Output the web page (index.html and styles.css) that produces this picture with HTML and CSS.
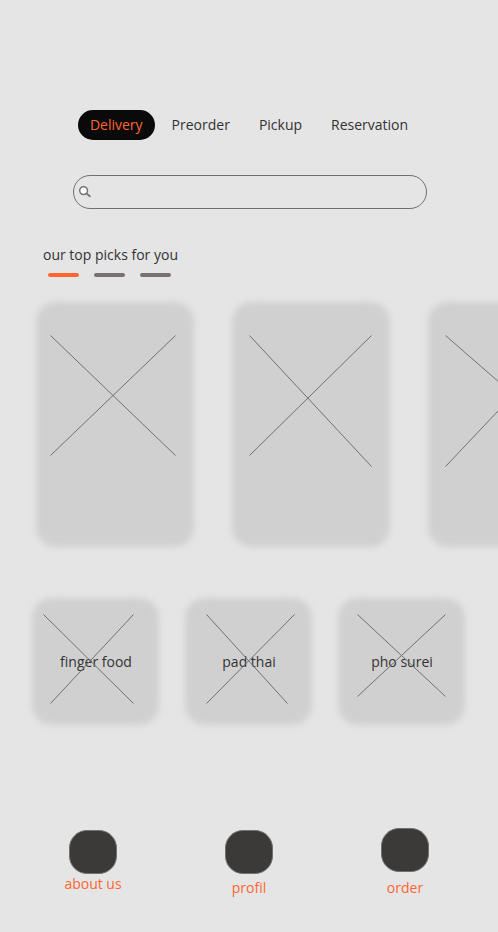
FILE: index.html
```html
<!DOCTYPE html>
<html lang="en">
<head>
<meta charset="utf-8">
<meta name="viewport" content="width=device-width, initial-scale=1">
<title>Top picks</title>
<link rel="stylesheet" href="styles.css">
</head>
<body>
<div class="app">
  <nav class="tabs">
    <button class="tab tab-active" type="button">Delivery</button>
    <button class="tab" type="button">Preorder</button>
    <button class="tab" type="button">Pickup</button>
    <button class="tab" type="button">Reservation</button>
  </nav>

  <form class="search">
    <svg class="search-icon" viewBox="0 0 14 14" aria-hidden="true">
      <circle class="lens" cx="5.6" cy="5.6" r="3.9"/>
      <path class="handle" d="M8.4 8.4 L12.4 11.8"/>
    </svg>
    <input class="search-input" type="search" aria-label="Search">
  </form>

  <main>
    <section class="picks">
      <h1 class="picks-title">our top picks for you</h1>
      <div class="pager">
        <span class="dash dash-active"></span>
        <span class="dash"></span>
        <span class="dash"></span>
      </div>
      <div class="carousel">
        <article class="card">
          <svg class="cross" aria-hidden="true"><path d="M13.5 32.5 L138.5 152.5 M13.5 152.5 L138.5 32.5"/></svg>
        </article>
        <article class="card">
          <svg class="cross" aria-hidden="true"><path d="M16.5 32.5 L138.5 163.5 M16.5 152.5 L138.5 32.5"/></svg>
        </article>
        <article class="card">
          <svg class="cross" aria-hidden="true"><path d="M16.5 32.5 L140.5 140.5 M16.5 163.5 L140.5 32.5"/></svg>
        </article>
      </div>
    </section>

    <section class="tiles">
      <a class="tile" href="#finger-food">finger food
        <svg class="cross" aria-hidden="true"><path d="M10.5 15.5 L100.5 104.5 M17.5 104.5 L100.5 15.5"/></svg>
      </a>
      <a class="tile" href="#pad-thai">pad thai
        <svg class="cross" aria-hidden="true"><path d="M20.5 15.5 L101.5 104.5 M20.5 104.5 L108.5 15.5"/></svg>
      </a>
      <a class="tile" href="#pho-surei">pho surei
        <svg class="cross" aria-hidden="true"><path d="M18.5 15.5 L106.5 97.5 M18.5 97.5 L106.5 15.5"/></svg>
      </a>
    </section>
  </main>

  <nav class="bottom-nav">
    <a class="nav-item nav-item-tight" href="#about"><span class="nav-icon"></span>about us</a>
    <a class="nav-item" href="#profil"><span class="nav-icon"></span>profil</a>
    <a class="nav-item nav-item-raised" href="#order"><span class="nav-icon"></span>order</a>
  </nav>
</div>
</body>
</html>
```
FILE: styles.css
```css
* {
  box-sizing: border-box;
}

body {
  margin: 0;
  background: #e5e5e5;
  color: #333;
  font: 14px/20px "Open Sans", "Noto Sans", sans-serif;
  font-variant-ligatures: none;
}

.app {
  padding-top: 110px;
  overflow: hidden;
}

.tabs {
  display: flex;
  justify-content: center;
  gap: 5px;
}

.tab {
  height: 30px;
  padding: 0 12px;
  border: 0;
  border-radius: 15px;
  background: transparent;
  color: inherit;
  font: inherit;
}

.tab-active {
  background: #0a0a0a;
  color: #ff6533;
}

.search {
  display: flex;
  align-items: center;
  height: 34px;
  margin: 35px 71px 0 73px;
  padding: 0 16px 0 4px;
  border: 1px solid #707070;
  border-radius: 17px;
}

.search-icon {
  flex: none;
  width: 14px;
  height: 14px;
}

.lens {
  fill: #fff;
  stroke: #757575;
  stroke-width: 1.5;
}

.handle {
  stroke: #757575;
  stroke-width: 1.8;
}

.search-input {
  flex: 1;
  min-width: 0;
  border: 0;
  outline: 0;
  background: transparent;
  color: inherit;
  font: inherit;
}

.picks {
  margin-top: 36px;
}

.picks-title {
  margin: 0 0 0 43px;
  font-size: 14px;
  font-weight: 400;
  line-height: 20px;
}

.pager {
  display: flex;
  gap: 15px;
  margin: 8px 0 0 48px;
}

.dash {
  width: 31px;
  height: 4px;
  border-radius: 2px;
  background: #7a7071;
}

.dash-active {
  background: #ff6533;
}

.carousel {
  display: flex;
  gap: 40px;
  margin-top: 26px;
  padding-left: 37px;
}

.card,
.tile {
  position: relative;
  isolation: isolate;
}

.card::before,
.tile::before {
  content: "";
  position: absolute;
  inset: -1px 0 0 -1px;
  z-index: -1;
  border-radius: 20px;
  background: #d0d0d0;
  filter: blur(3px);
}

.card::before {
  right: -1px;
}

.card {
  flex: none;
  width: 156px;
  height: 244px;
}

.cross {
  position: absolute;
  inset: 0;
  width: 100%;
  height: 100%;
  fill: none;
  stroke: #707070;
  stroke-width: 1;
}

.tiles {
  display: grid;
  grid-template-columns: repeat(3, 126px);
  justify-content: center;
  gap: 27px;
  margin-top: 52px;
}

.tile {
  display: flex;
  align-items: center;
  justify-content: center;
  height: 126px;
  color: inherit;
  text-decoration: none;
}

.bottom-nav {
  display: grid;
  grid-template-columns: repeat(3, 156px);
  justify-content: center;
  align-items: end;
  margin-top: 103px;
  padding-bottom: 32px;
}

.nav-item {
  display: flex;
  flex-direction: column;
  align-items: center;
  gap: 4px;
  color: #ff6533;
  text-decoration: none;
}

.nav-item-tight {
  gap: 0;
  padding-bottom: 4px;
}

.nav-item-raised {
  gap: 6px;
}

.nav-icon {
  width: 48px;
  height: 44px;
  border: 1px solid #707070;
  border-radius: 18px;
  background: #3b3a38;
}
```
